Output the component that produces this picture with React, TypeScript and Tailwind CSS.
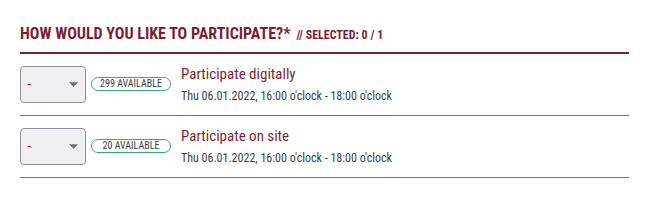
import React from "react";

const options = [
  { id: "digital", title: "Participate digitally", available: 299 },
  { id: "onsite", title: "Participate on site", available: 20 },
];

const font = { fontFamily: '"Roboto Condensed", "Liberation Sans Narrow", "DejaVu Sans Condensed", Roboto, sans-serif' };

const App = () => {
  return (
    <div className="w-[649px] h-[204px] bg-white px-5 pt-[24px]" style={font}>
      <div className="flex items-baseline gap-1.5 pb-[8px] border-b-2 border-[#7b1f35] text-[#7b1f35] font-bold uppercase">
        <span className="text-[16px] leading-[20px]">How would you like to participate?*</span>
        <span className="text-[12px] leading-[16px]">// Selected: 0 / 1</span>
      </div>

      {options.map((opt) => (
        <div key={opt.id} className="flex items-start border-b border-[#6e7378] py-[12px]">
          <div className="w-[66px] h-[37px] shrink-0 rounded-[4px] border border-[#8d9298] bg-[#eff0f2] flex items-center justify-between pl-[6px] pr-[6px]">
            <span className="text-[#c8202f] text-[13px] font-bold">-</span>
            <svg width="9" height="5" viewBox="0 0 10 5" className="mr-[1px]">
              <path d="M0 0 L10 0 L5 5 Z" fill="#6b6f74" />
            </svg>
          </div>
          <div className="ml-[5px] mt-[11px] w-[80px] h-[14px] shrink-0 rounded-full border border-[#3aa585] flex items-center justify-center text-[10px] leading-none text-[#3c3f43] uppercase">
            {opt.available} available
          </div>
          <div className="ml-[10px] -mt-[1px] flex flex-col">
            <span className="text-[15px] leading-[18px] text-[#7b1f35]">{opt.title}</span>
            <span className="mt-[6px] text-[12px] leading-[14px] text-[#3c3f43]">
              Thu 06.01.2022, 16:00 o'clock - 18:00 o'clock
            </span>
          </div>
        </div>
      ))}
    </div>
  );
};

export default App;
